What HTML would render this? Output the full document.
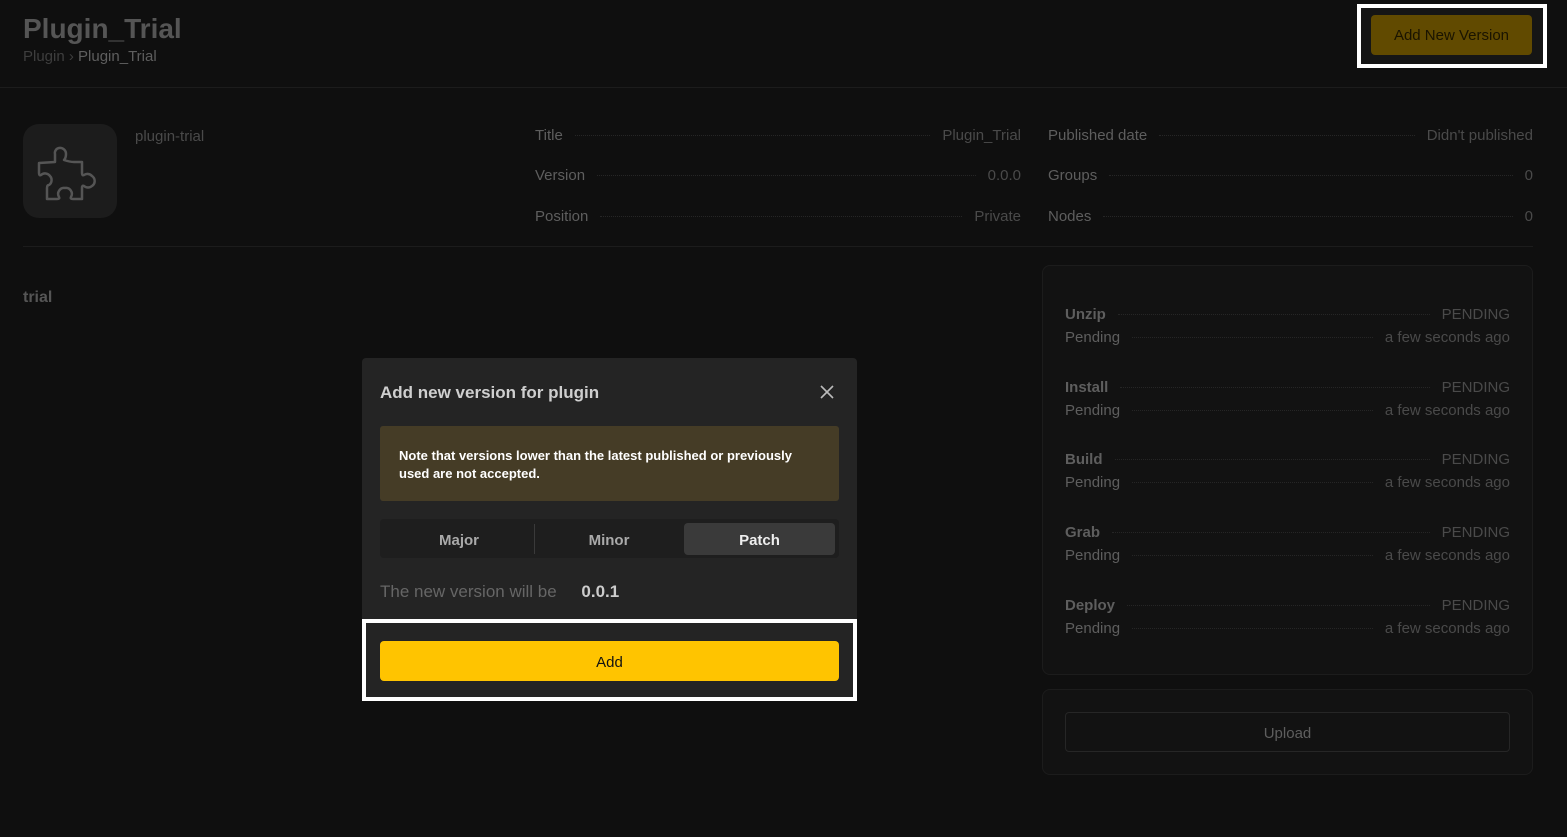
<!DOCTYPE html><html><head><style>
*{box-sizing:border-box;margin:0;padding:0}
body{width:1567px;height:837px;background:#0f0f0f;font-family:"Liberation Sans",sans-serif;position:relative;overflow:hidden;color:#5a5a5a}
.a{position:absolute}
.row{position:absolute;display:flex;align-items:center;font-size:15px;color:#5e5e5e}
.row .d{flex:1;border-bottom:1px dotted #262626;margin:0 12px}
.row .v{color:#4a4a4a}
.it{position:absolute;left:1065px;width:445px}
.it .row{position:relative;width:445px;height:23px}
</style></head><body>
<div class="a" style="left:23px;top:13px;font-size:28px;font-weight:bold;color:#555">Plugin_Trial</div>
<div class="a" style="left:23px;top:48px;font-size:15px;color:#3e3e3e">Plugin › <span style="color:#5e5e5e">Plugin_Trial</span></div>
<div class="a" style="left:0;top:87px;width:1567px;height:1px;background:#1c1c1c"></div>
<div class="a" style="left:1357px;top:4px;width:190px;height:64px;border:4px solid #fff;background:#151515"></div>
<div class="a" style="left:1371px;top:15px;width:161px;height:40px;background:#614a00;border-radius:4px;color:#1a1400;font-size:15px;display:flex;align-items:center;justify-content:center">Add New Version</div>
<div class="a" style="left:23px;top:124px;width:94px;height:94px;background:#1c1c1c;border-radius:16px"></div>
<svg class="a" style="left:33px;top:139px" width="68" height="64" viewBox="0 0 68 64"><path d="M22 23 V15 a5 5 0 0 1 4-6 a6 6 0 0 1 7 6 q0 4-2 6 q6 2 10 2 h8 v11 q0 3 2 2 a6 6 0 0 1 8 1 a6 6 0 0 1 0 10 a6 6 0 0 1-8 0 q-2-1-2 2 v11 h-9 q-3 0-2-2 a6 6 0 0 0-6-9 a6 6 0 0 0-6 9 q1 2-2 2 h-10 v-11 q0-3 2-3 a6 6 0 0 0 1-9 a6 6 0 0 0-9-1 q-2 1-2-2 v-10 z" fill="none" stroke="#555" stroke-width="2.5" stroke-linejoin="round"/></svg>
<div class="a" style="left:135px;top:128px;font-size:15px;color:#4a4a4a">plugin-trial</div>
<div class="row" style="left:535px;top:127px;width:486px"><span>Title</span><span class="d"></span><span class="v">Plugin_Trial</span></div>
<div class="row" style="left:535px;top:167px;width:486px"><span>Version</span><span class="d"></span><span class="v">0.0.0</span></div>
<div class="row" style="left:535px;top:208px;width:486px"><span>Position</span><span class="d"></span><span class="v">Private</span></div>
<div class="row" style="left:1048px;top:127px;width:485px"><span>Published date</span><span class="d"></span><span class="v">Didn't published</span></div>
<div class="row" style="left:1048px;top:167px;width:485px"><span>Groups</span><span class="d"></span><span class="v">0</span></div>
<div class="row" style="left:1048px;top:208px;width:485px"><span>Nodes</span><span class="d"></span><span class="v">0</span></div>
<div class="a" style="left:23px;top:246px;width:1510px;height:1px;background:#1c1c1c"></div>
<div class="a" style="left:23px;top:289px;font-size:16px;font-weight:bold;color:#555">trial</div>
<div class="a" style="left:1042px;top:265px;width:491px;height:410px;background:#121212;border:1px solid #1c1c1c;border-radius:8px"></div>
<div class="it" style="top:303px"><div class="row"><b>Unzip</b><span class="d"></span><span class="v">PENDING</span></div><div class="row"><span>Pending</span><span class="d"></span><span class="v">a few seconds ago</span></div></div>
<div class="it" style="top:376px"><div class="row"><b>Install</b><span class="d"></span><span class="v">PENDING</span></div><div class="row"><span>Pending</span><span class="d"></span><span class="v">a few seconds ago</span></div></div>
<div class="it" style="top:448px"><div class="row"><b>Build</b><span class="d"></span><span class="v">PENDING</span></div><div class="row"><span>Pending</span><span class="d"></span><span class="v">a few seconds ago</span></div></div>
<div class="it" style="top:521px"><div class="row"><b>Grab</b><span class="d"></span><span class="v">PENDING</span></div><div class="row"><span>Pending</span><span class="d"></span><span class="v">a few seconds ago</span></div></div>
<div class="it" style="top:594px"><div class="row"><b>Deploy</b><span class="d"></span><span class="v">PENDING</span></div><div class="row"><span>Pending</span><span class="d"></span><span class="v">a few seconds ago</span></div></div>
<div class="a" style="left:1042px;top:689px;width:491px;height:86px;background:#121212;border:1px solid #1c1c1c;border-radius:8px"></div>
<div class="a" style="left:1065px;top:712px;width:445px;height:40px;border:1px solid #262626;border-radius:4px;font-size:15px;color:#5e5e5e;display:flex;align-items:center;justify-content:center;padding-top:2px">Upload</div>
<div class="a" style="left:362px;top:358px;width:495px;height:262px;background:#242424;border-radius:4px 4px 0 0"></div>
<div class="a" style="left:380px;top:383px;font-size:17px;font-weight:bold;color:#cfcfcf">Add new version for plugin</div>
<svg class="a" style="left:820px;top:385px" width="14" height="14"><path d="M1 1L13 13M13 1L1 13" stroke="#bbb" stroke-width="1.6"/></svg>
<div class="a" style="left:380px;top:426px;width:459px;height:75px;background:#453c26;border-radius:3px;padding:21px 19px 0;font-size:13px;font-weight:bold;color:#fff;line-height:18px">Note that versions lower than the latest published or previously used are not accepted.</div>
<div class="a" style="left:380px;top:519px;width:459px;height:39px;background:#1e1e1e;border-radius:4px"></div>
<div class="a" style="left:534px;top:524px;width:1px;height:30px;background:#3a3a3a"></div>
<div class="a" style="left:684px;top:523px;width:151px;height:32px;background:#3a3a3a;border-radius:4px"></div>
<div class="a" style="left:380px;top:532px;width:158px;text-align:center;font-size:15px;font-weight:bold;color:#aaa">Major</div>
<div class="a" style="left:534px;top:532px;width:150px;text-align:center;font-size:15px;font-weight:bold;color:#aaa">Minor</div>
<div class="a" style="left:684px;top:532px;width:151px;text-align:center;font-size:15px;font-weight:bold;color:#eee">Patch</div>
<div class="a" style="left:380px;top:582px;font-size:17px;color:#666">The new version will be <b style="color:#ccc;margin-left:20px">0.0.1</b></div>
<div class="a" style="left:362px;top:619px;width:495px;height:82px;border:4px solid #fff;background:#242424"></div>
<div class="a" style="left:380px;top:641px;width:459px;height:40px;background:#ffc400;border-radius:4px;font-size:15px;color:#111;display:flex;align-items:center;justify-content:center;padding-top:2px">Add</div>
</body></html>
